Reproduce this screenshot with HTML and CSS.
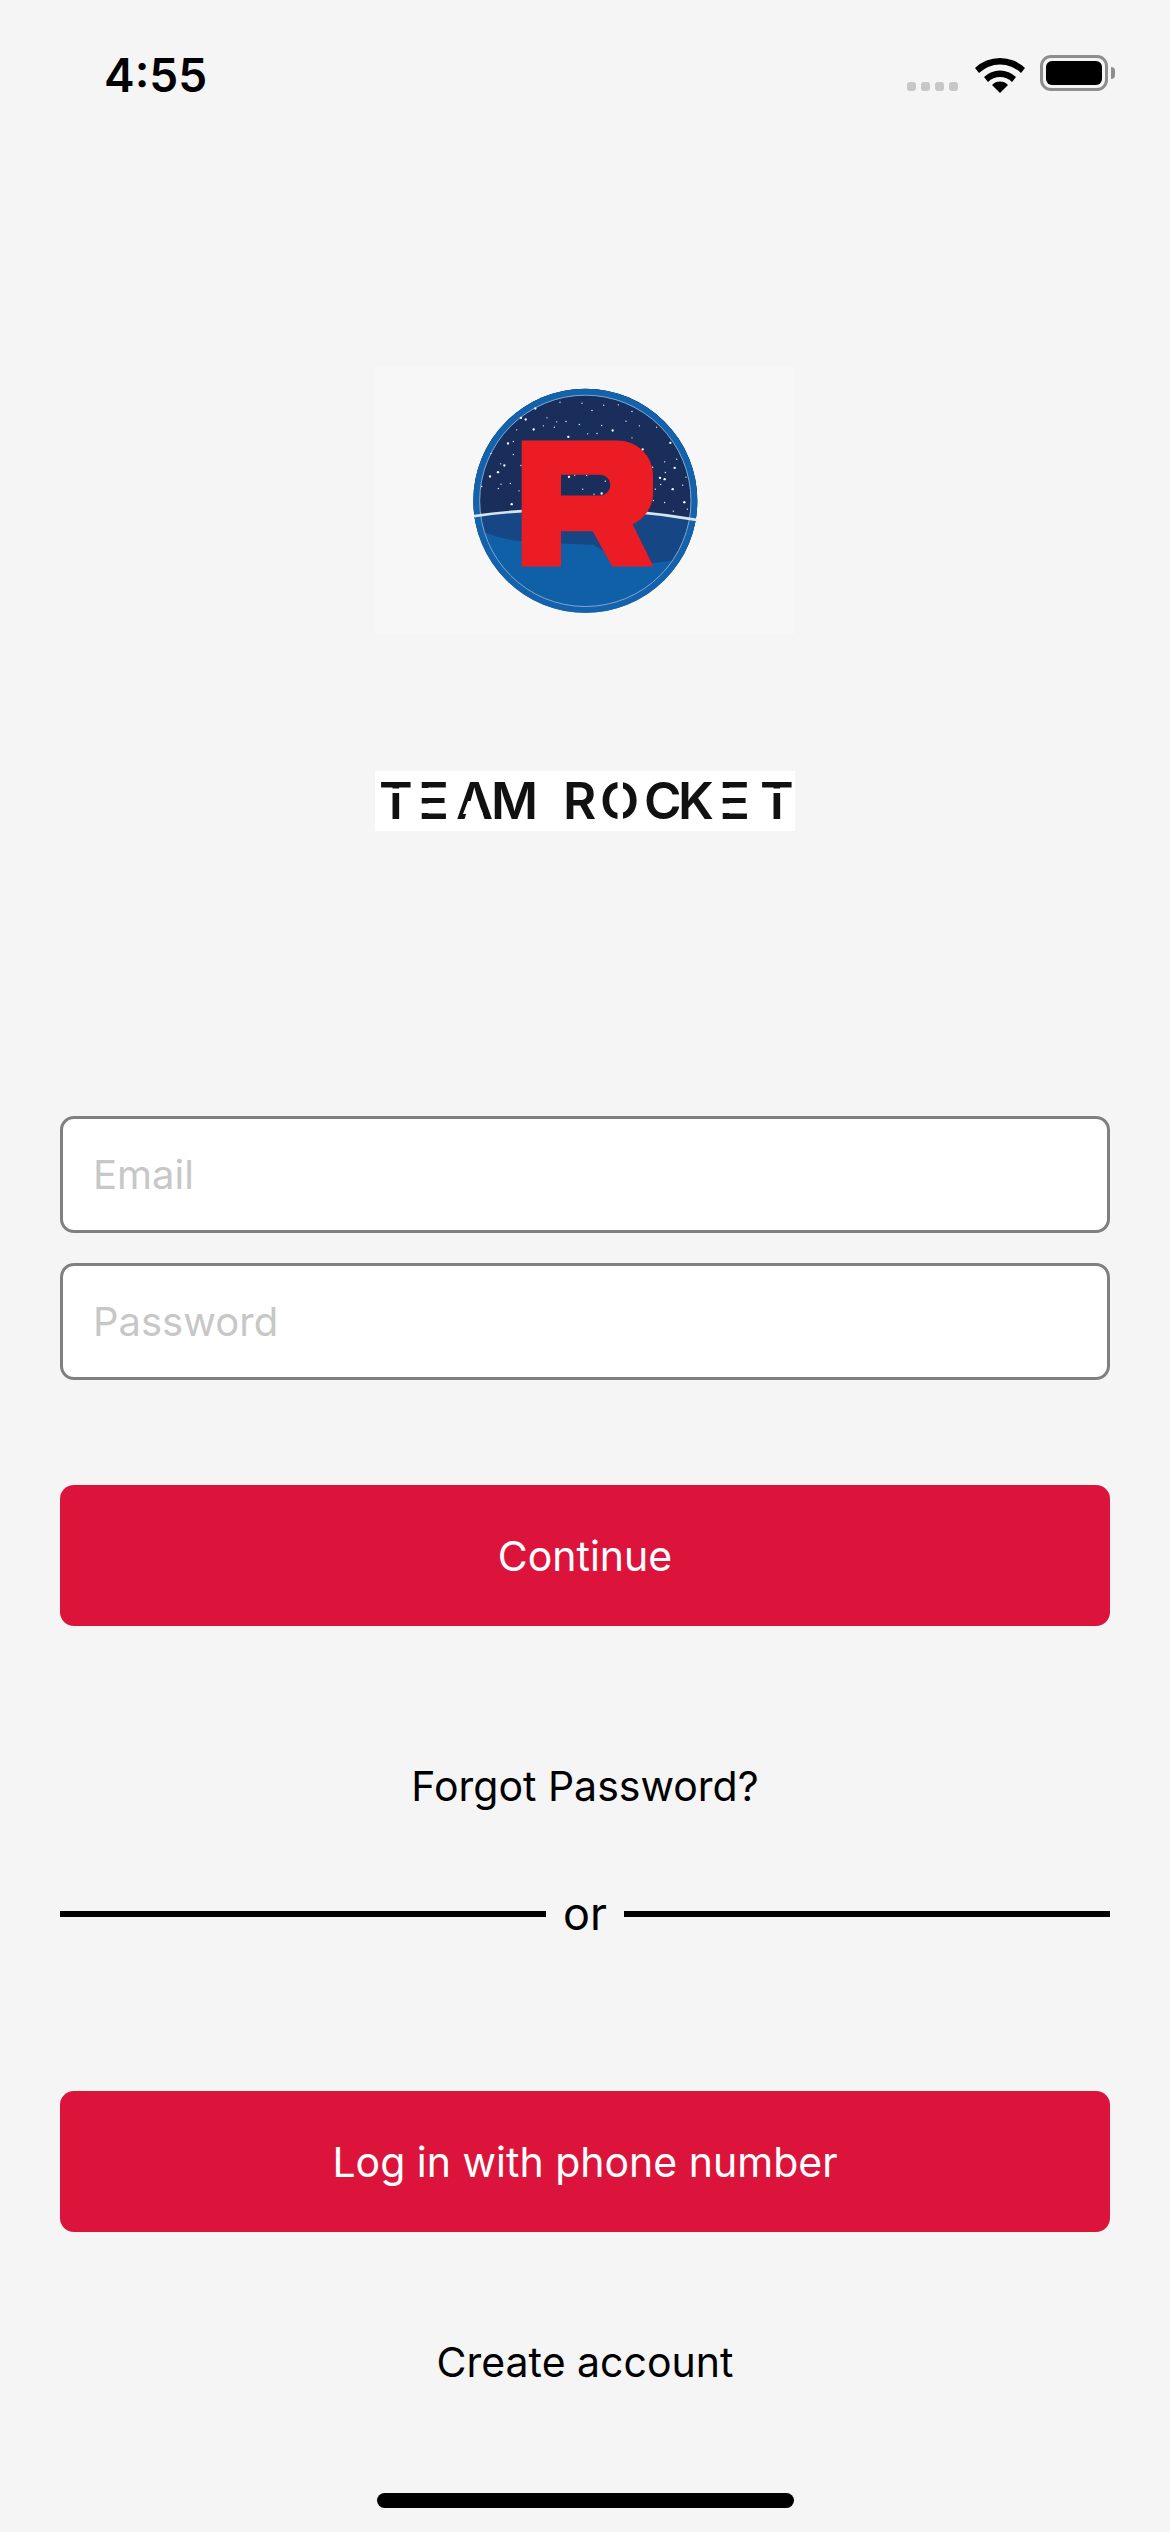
FILE: index.html
```html
<!DOCTYPE html>
<html lang="en">
<head>
<meta charset="utf-8">
<title>Team Rocket</title>
<link rel="stylesheet" href="styles.css">
</head>
<body>
<main class="screen">
  <header class="status">
    <span class="time">4:55</span>
    <div class="status-icons">
      <div class="signal"><i></i><i></i><i></i><i></i></div>
      <svg class="wifi" viewBox="0 0 50 38" width="50" height="38">
        <path d="M0 13 A36 36 0 0 1 50 13 L46 18 A30 30 0 0 0 4 18 Z"/>
        <path d="M9 22 A23 23 0 0 1 41 22 L37 27 A17 17 0 0 0 13 27 Z"/>
        <path d="M17 30 A11 11 0 0 1 33 30 L25 38 Z"/>
      </svg>
      <div class="battery"><div class="battery-fill"></div></div>
      <div class="battery-nub"></div>
    </div>
  </header>

  <div class="brand">
    <div class="emblem">
      <svg viewBox="45 52 1260 800" width="420" height="267">
        <defs><clipPath id="disc"><circle cx="676" cy="453" r="336"/></clipPath></defs>
        <circle cx="676" cy="453" r="336" fill="#1060a8"/>
        <g clip-path="url(#disc)">
          <rect x="340" y="117" width="672" height="390" fill="#1a2e5c"/>
          <path d="M340 500 Q676 452 1012 510 L1012 620 Q900 640 800 648 L700 585 Q560 580 460 572 L410 560 L380 550 L340 560 Z" fill="#164784"/>
        </g>
        <circle cx="676" cy="453" r="326" fill="none" stroke="#1362ab" stroke-width="20"/>
        <circle cx="676" cy="453" r="317" fill="none" stroke="#7fa6cf" stroke-width="3"/>
        <path d="M342 499 Q676 452 1010 510" fill="none" stroke="#d5e4f0" stroke-width="8"/>
        <g class="stars">
          <circle cx="526" cy="176" r="3.5"/><circle cx="483" cy="204" r="3.5"/><circle cx="497" cy="209" r="3.5"/><circle cx="521" cy="239" r="3.5"/><circle cx="444" cy="281" r="3.5"/><circle cx="625" cy="261" r="3.5"/><circle cx="758" cy="242" r="3.5"/><circle cx="848" cy="299" r="3.5"/><circle cx="931" cy="279" r="3.5"/><circle cx="944" cy="354" r="3.5"/><circle cx="900" cy="384" r="3.5"/><circle cx="914" cy="388" r="3.5"/><circle cx="938" cy="418" r="3.5"/><circle cx="973" cy="457" r="3.5"/><circle cx="455" cy="463" r="3.5"/><circle cx="390" cy="380" r="3.5"/><circle cx="414" cy="367" r="3.5"/><circle cx="433" cy="347" r="3.5"/><circle cx="627" cy="381" r="3.5"/><circle cx="725" cy="431" r="3.5"/>
          <circle cx="600" cy="157" r="2"/><circle cx="666" cy="160" r="2"/><circle cx="696" cy="182" r="2"/><circle cx="731" cy="166" r="2"/><circle cx="775" cy="165" r="2"/><circle cx="816" cy="185" r="2"/><circle cx="561" cy="204" r="2"/><circle cx="590" cy="216" r="2"/><circle cx="618" cy="215" r="2"/><circle cx="658" cy="224" r="2"/><circle cx="725" cy="227" r="2"/><circle cx="798" cy="214" r="2"/><circle cx="838" cy="228" r="2"/><circle cx="890" cy="232" r="2"/><circle cx="470" cy="240" r="2"/><circle cx="550" cy="228" r="2"/><circle cx="583" cy="232" r="2"/><circle cx="683" cy="252" r="2"/><circle cx="711" cy="251" r="2"/><circle cx="816" cy="264" r="2"/><circle cx="460" cy="275" r="2"/><circle cx="422" cy="342" r="2"/><circle cx="460" cy="314" r="2"/><circle cx="483" cy="347" r="2"/><circle cx="423" cy="403" r="2"/><circle cx="451" cy="401" r="2"/><circle cx="415" cy="416" r="2"/><circle cx="477" cy="423" r="2"/><circle cx="365" cy="410" r="2"/><circle cx="393" cy="311" r="2"/><circle cx="914" cy="336" r="2"/><circle cx="950" cy="328" r="2"/><circle cx="878" cy="352" r="2"/><circle cx="916" cy="368" r="2"/><circle cx="978" cy="382" r="2"/><circle cx="968" cy="406" r="2"/><circle cx="886" cy="418" r="2"/><circle cx="902" cy="404" r="2"/><circle cx="914" cy="458" r="2"/><circle cx="880" cy="452" r="2"/><circle cx="940" cy="484" r="2"/><circle cx="982" cy="478" r="2"/><circle cx="668" cy="418" r="2"/><circle cx="702" cy="433" r="2"/><circle cx="644" cy="376" r="2"/><circle cx="680" cy="377" r="2"/><circle cx="736" cy="394" r="2"/>
        </g>
        <path fill="#ec1c24" fill-rule="evenodd" d="M485 272 H775 A104 104 0 0 1 879 376 V420 A104 104 0 0 1 818 523 L880 650 H757 L698 544 H603 V650 H485 Z M603 375 V437 H720 A31 31 0 0 0 720 375 Z"/>
      </svg>
    </div>
    <div class="wordmark">
      <svg viewBox="375 771 420 60" width="420" height="60">
        <text class="wordmark-text" x="379 418 456 491 540 563 600 644 678 719 760" y="819">TEAM ROCKET</text>
        <g class="stencil">
          <rect x="381" y="788.5" width="30" height="4.5"/>
          <rect x="762" y="788.5" width="30" height="4.5"/>
          <rect x="419" y="788" width="32" height="10"/>
          <rect x="419" y="803.5" width="32" height="9.5"/>
          <rect x="721" y="788" width="32" height="10"/>
          <rect x="721" y="803.5" width="32" height="9.5"/>
          <rect x="617.5" y="780" width="5.5" height="41"/>
          <polygon points="468,801 478,801 483,814 463,814"/>
        </g>
      </svg>
    </div>
  </div>

  <form class="form">
    <div class="field">Email</div>
    <div class="field">Password</div>
    <button class="btn btn-continue" type="button">Continue</button>
    <a class="link link-forgot">Forgot Password?</a>
    <div class="divider"><span class="rule"></span><span class="or">or</span><span class="rule"></span></div>
    <button class="btn btn-phone" type="button">Log in with phone number</button>
    <a class="link link-create">Create account</a>
  </form>
  <div class="home-indicator"></div>
</main>
</body>
</html>
```

FILE: styles.css
```css
* { box-sizing: border-box; }
html, body { margin: 0; padding: 0; }
body { background: #f5f5f5; font-family: Inter, "Noto Sans", sans-serif; color: #000; }
.screen { width: 1170px; height: 2532px; display: flex; flex-direction: column; align-items: center; position: relative; overflow: hidden; }

.status { width: 100%; height: 150px; padding: 51px 55px 0 104px; display: flex; justify-content: space-between; align-items: flex-start; }
.time { font-size: 46px; font-weight: 600; line-height: 48px; }
.status-icons { display: flex; align-items: flex-start; margin-top: 4px; }
.signal { display: flex; gap: 5px; margin-top: 27px; margin-right: 17px; }
.signal i { width: 9px; height: 9px; border-radius: 3px; background: #c7c7c7; }
.wifi { margin-right: 15px; }
.battery { width: 68px; height: 36px; border: 3px solid #8e8e8e; border-radius: 11px; padding: 3px; }
.battery-fill { width: 100%; height: 100%; background: #000; border-radius: 6px; }
.battery-nub { width: 4px; height: 12px; margin: 12px 0 0 3px; background: #8e8e8e; border-radius: 0 4px 4px 0; }

.brand { display: flex; flex-direction: column; align-items: center; margin-top: 217px; }
.emblem { width: 420px; height: 267px; background: #f7f7f7; }
.emblem svg { display: block; }
.stars circle { fill: #fff; }
.wordmark { width: 420px; height: 60px; margin-top: 137px; background: #fff; }
.wordmark svg { display: block; }
.wordmark-text { font-size: 51px; font-weight: 600; fill: #111; }
.stencil { fill: #fff; }

.form { width: 1050px; display: flex; flex-direction: column; margin-top: 285px; }
.field { height: 117px; border: 3px solid #808080; border-radius: 14px; background: #fff; padding-left: 30px; display: flex; align-items: center; font-size: 40px; color: #c7c7c7; margin-bottom: 30px; }
.btn { height: 141px; border: 0; border-radius: 14px; background: #dc143c; color: #fff; font-family: inherit; font-size: 41px; text-align: center; padding: 0; }
.btn-continue { margin-top: 75px; }
.link { font-size: 41px; line-height: 50px; text-align: center; }
.link-forgot { margin-top: 135px; }
.divider { display: flex; align-items: center; gap: 17px; margin-top: 78px; }
.rule { flex: 1; height: 6px; background: #000; }
.or { font-size: 45px; line-height: 50px; }
.btn-phone { margin-top: 152px; }
.link-create { margin-top: 105px; }
.home-indicator { position: absolute; left: 377px; bottom: 24px; width: 417px; height: 15px; border-radius: 8px; background: #000; }
```
